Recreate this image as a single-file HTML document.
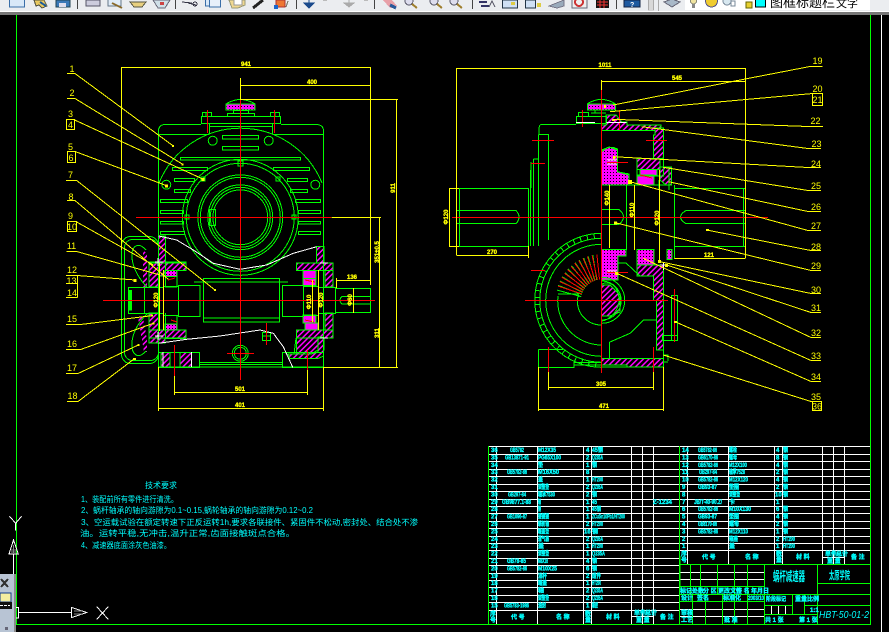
<!DOCTYPE html>
<html><head><meta charset="utf-8"><title>CAD</title>
<style>
html,body{margin:0;padding:0;background:#000;width:889px;height:632px;overflow:hidden}
svg{position:absolute;left:0;top:0;display:block}
.g{stroke:#0f0;fill:none;stroke-width:1}
.y{stroke:#ff0;fill:none;stroke-width:1}
.r{stroke:#f00;fill:none;stroke-width:1}
.w{stroke:#fff;fill:none;stroke-width:1}
text{font-family:"Liberation Sans","Noto Sans CJK SC",sans-serif}
.n text,text.n{fill:#ff0;font-size:9px;stroke:none}
.d text,text.d{fill:#ff0;font-size:6px;font-weight:bold;stroke:#ff0;stroke-width:.3}
.c text{fill:#0ff;font-size:6px;font-weight:bold;stroke:#0ff;stroke-width:.35}
.t text{fill:#0ff;font-size:8px;stroke:none}
</style></head><body>
<svg width="889" height="632" viewBox="0 0 889 632" xmlns="http://www.w3.org/2000/svg" shape-rendering="crispEdges">
<defs>
<pattern id="h" width="4" height="4" patternUnits="userSpaceOnUse" patternTransform="rotate(45)"><rect width="4" height="4" fill="#000"/><rect width="1.6" height="4" fill="#f0f"/></pattern>
<pattern id="m" width="3" height="3" patternUnits="userSpaceOnUse"><rect width="3" height="3" fill="#f0f"/><rect x="1" y="1" width="1" height="1" fill="#000"/></pattern>
</defs>

<!-- frame -->
<path class="g" d="M16.5 15V624.5H870.5V15"/>
<path class="w" d="M881.5 15V632"/>

<!-- LEFT VIEW hatch -->
<g stroke="#0f0" stroke-width="1">
<rect x="226" y="104" width="29" height="6" fill="url(#m)"/>
<path fill="url(#h)" d="M158.7 236H165.3V262H186V270.7H165V276H158.7V287H149V262H158.7Z"/>
<path fill="url(#h)" d="M149 330H186V338.7H165V343H149ZM149 313H158.7V330H149Z"/>
<rect x="165" y="270.7" width="12" height="6" fill="url(#m)"/>
<rect x="165" y="324" width="12" height="6" fill="url(#m)"/>
<path fill="url(#h)" d="M316.7 246.7H324V263H333V270.7H296.7V263H316.7Z"/>
<path fill="url(#h)" d="M296.7 330H333V338H324V350H318L311 354H296.7V338Z"/>
<path fill="url(#h)" d="M325 270.7H333V287H325ZM325 313H333V330H325Z"/>
<rect x="303" y="270.7" width="13" height="8" fill="#f0f"/>
<rect x="303" y="278.7" width="13" height="7" fill="#f0f"/>
<rect x="303" y="315" width="13" height="8" fill="#f0f"/>
<rect x="305" y="323" width="13" height="7" fill="#f0f"/>
<rect x="161" y="352.3" width="9" height="15" fill="url(#h)"/>
<rect x="180" y="352.3" width="11.7" height="15" fill="url(#h)"/>
<path fill="url(#h)" d="M288 354H311L318 352V337H323.7V356L318 358.5H290Z"/>
<path fill="url(#h)" d="M143 250L147 254V287H143ZM138 317H143L147 340V352H144Z" stroke="none"/>
</g>

<!-- LEFT VIEW green -->
<g class="g">
<path d="M158.5 367V131Q158.5 124.5 165.5 124.5H201M281 124.5H316Q323.5 124.5 323.5 131V367H158.5"/>
<path d="M158.5 134.5H209M273 134.5H323.5"/>
<rect x="201.5" y="116.5" width="79" height="7"/>
<path d="M209.5 123.5V134.5M272.5 123.5V134.5M209.5 126.5H272.5"/>
<rect x="202.5" y="112.5" width="9" height="4"/><rect x="270.5" y="112.5" width="9" height="4"/>
<path d="M206 112.5V116.5M275 112.5V116.5"/>
<rect x="227.5" y="113.5" width="27" height="3"/><rect x="233.5" y="110.5" width="15" height="3"/>
<path d="M226 104Q232 100 240.3 99.3Q249 100 255 104"/>
<path d="M159 183A88 88 0 0 1 322 183"/>
<circle cx="212.7" cy="140.7" r="4.5"/><circle cx="268.7" cy="140.7" r="4.5"/><circle cx="166.3" cy="184.7" r="4.5"/><circle cx="315.3" cy="184.7" r="4.5"/>
<rect x="222.5" y="135.5" width="36" height="3.5"/><rect x="222.5" y="146.5" width="36" height="3.5"/>
<rect x="180.5" y="157.5" width="120" height="2.5"/>
<rect x="172.5" y="167.5" width="35" height="3"/><rect x="273.5" y="167.5" width="36" height="3"/>
<rect x="174.5" y="178.5" width="20" height="3"/><rect x="287.5" y="178.5" width="20" height="3"/>
<rect x="174.5" y="189.5" width="16" height="3"/><rect x="290.5" y="189.5" width="17" height="3"/>
<rect x="160.5" y="199.5" width="27" height="3"/><rect x="295.5" y="199.5" width="25" height="3"/>
<rect x="160.5" y="210.5" width="23" height="3"/><rect x="298.5" y="210.5" width="22" height="3"/>
<rect x="160.5" y="221.5" width="23" height="2.5"/><rect x="298.5" y="221.5" width="22" height="2.5"/>
<rect x="160.5" y="231.5" width="24" height="3"/><rect x="298.5" y="231.5" width="22" height="3"/>
<circle cx="240.3" cy="217.3" r="58"/><circle cx="240.3" cy="217.3" r="54"/>
<circle cx="240.3" cy="217.3" r="42.4"/><circle cx="240.3" cy="217.3" r="40"/>
<circle cx="240.3" cy="217.3" r="32.4"/><circle cx="240.3" cy="217.3" r="30"/><circle cx="240.3" cy="217.3" r="27.4"/>
<rect x="238" y="161" width="5" height="5"/><rect x="185" y="215" width="4" height="4"/><rect x="292" y="215" width="4" height="4"/><rect x="201" y="177" width="4" height="4"/><rect x="276" y="177" width="4" height="4"/>
<rect x="209.5" y="209.5" width="6" height="16"/>
<!-- shafts -->
<rect x="203.5" y="278.5" width="76" height="43.5"/><path d="M203.5 282H279M203.5 318H279"/>
<path d="M194 282H216M262 282H288"/>
<rect x="178.5" y="285.5" width="21.5" height="31"/><rect x="163.5" y="286.5" width="15" height="29"/>
<rect x="144.5" y="287.5" width="19" height="26"/><rect x="128.5" y="287.5" width="16" height="26"/>
<rect x="282.5" y="285.5" width="21" height="31"/><rect x="303.5" y="286.5" width="15" height="29"/>
<rect x="318.5" y="287.5" width="17" height="26"/><rect x="335.5" y="288.5" width="35" height="24"/>
<path d="M370 296.5H342Q338 300 342 304H370"/>
<rect x="129" y="290.7" width="2.4" height="19.3" fill="#0f0"/>
<!-- fan cover -->
<rect x="121.5" y="236.5" width="37" height="127" rx="9"/>
<rect x="124.5" y="239.5" width="34" height="121" rx="8"/>
<path d="M146 250C138 241 131 246 132 258C133 270 141 281 147 287M146 351C138 360 131 355 132 342C133 330 141 320 147 314"/>
<!-- feet -->
<rect x="158.5" y="352.5" width="41" height="15"/><rect x="282.5" y="352.5" width="41" height="15"/>
<path d="M199.5 362.5H282.5M199.5 364.5H282.5"/>
<circle cx="240.3" cy="353.3" r="8"/><circle cx="240.3" cy="353.3" r="6"/>
<rect x="262.5" y="332.5" width="8" height="8"/><path d="M262.5 336H270.5"/>
<path d="M296 338L294 354"/>
<path d="M296.5 263H333V287H325V270.7M296.5 338H333V313H325V330"/>
<path d="M149 263V287M149 313V338H186M149 263H186"/>
<path d="M165.3 263V287H177M165.3 313V338M177 270V286M177 316V330"/>
</g>
<path class="w" d="M158.7 236L176.7 240L193.3 250L213.3 263.3L240 269.3L266.7 265L293.3 253.3L316.7 246.7"/>
<path class="w" d="M158.7 343.3L186.7 339.3L220 336L260 330L273.3 333.3L283.3 346.7L292.7 367.3"/>
<path class="w" d="M163 352V367M191.5 352V367M155 262H163M158 258V266M155 336H163M158 332V340M320 263H328M320 338H328"/>
<!-- LEFT red -->
<g class="r">
<path d="M240.3 85V380M136 217.3H331M103 300.3H375M207.3 110V133M274.3 110V133"/>
<path d="M227 353.3H254M266.3 323V345M174.3 345V376M307.3 350V370"/>
<path d="M168 280L175 278M171 320L177 322M305 280L315 282M305 320L314 322" stroke-width="1"/>
</g>
<!-- LEFT yellow -->
<g class="y">
<path d="M121.5 67V250M370.5 67V285M121.5 67.5H370.5"/>
<path d="M240.5 78V99M240.5 85.5H370.5"/>
<path d="M240 99.5H398M396.5 99.5V367.5M323 367.5H398"/>
<path d="M331.7 217.5H381M379.5 217.5V367"/>
<path d="M158.5 367V411M323.5 367V411M158.5 408.5H323.5M174.5 376V395M307.5 370V395M174.5 392.5H307.5"/>
<path d="M336.5 280.5H370.5M336.5 278V288"/>
<path d="M159.5 263V331M163.5 270V330M312.5 280V322M318.5 270V330M353.5 288V313"/>
<!-- leaders -->
<path d="M67 73.5H75L173.3 146"/>
<path d="M67 98.5H75L182.7 164.3"/>
<path d="M74.7 120L202.7 179"/><rect x="66.5" y="119.5" width="8" height="10"/>
<path d="M67 151.5H75L166.7 185.7"/><rect x="67.5" y="151.5" width="8" height="11"/>
<path d="M66 180.5H76.7L215 290"/>
<path d="M67 200.5H75L168.3 279.3"/>
<path d="M76.7 222L153.3 265"/><rect x="67.5" y="221.5" width="9" height="10"/>
<path d="M66.7 251.5H76.7L160 275"/>
<path d="M66 275.5H77.3L135 280M66 283.5H77M66 297.5H77.3M77.5 275.5V297.5"/>
<path d="M66 324.5H80.7L151.7 315.7"/>
<path d="M66 349.5H80.7L153.3 323.3"/>
<path d="M66 373.5H78L138.3 345"/>
<path d="M67 401.5H78L134 359"/>
</g>
<g fill="#ff0" shape-rendering="crispEdges"><rect x="172" y="145" width="2" height="2"/><rect x="181.5" y="163.5" width="2" height="2"/><rect x="201.5" y="178" width="3" height="3"/><rect x="165" y="184.5" width="3" height="3"/><rect x="214" y="289" width="2" height="2"/><rect x="133.5" y="279" width="3" height="3"/><rect x="151" y="314.5" width="2" height="2"/><rect x="152.5" y="322.5" width="2" height="2"/><rect x="137.5" y="344" width="2" height="2"/><rect x="133" y="358" width="3" height="2"/></g>
<g class="n" text-anchor="middle">
<text x="72" y="72">1</text><text x="72" y="96">2</text><text x="70.5" y="117">3</text><text x="70.5" y="128">4</text><text x="70.5" y="150">5</text><text x="71" y="161">6</text><text x="70.5" y="178">7</text><text x="71" y="200">8</text><text x="70.5" y="219">9</text><text x="72" y="230">10</text>
<text x="71.5" y="249">11</text><text x="72" y="273">12</text><text x="71.5" y="284">13</text><text x="72" y="296">14</text><text x="72" y="322">15</text><text x="72" y="347">16</text><text x="72" y="371">17</text><text x="72.5" y="399">18</text>
</g>
<g class="d" text-anchor="middle">
<text x="246" y="66">941</text><text x="312" y="84">400</text><text x="240" y="391">501</text><text x="240" y="407">401</text><text x="352" y="279">136</text>
<text transform="translate(395,188) rotate(-90)">911</text>
<text transform="translate(379,252) rotate(-90)">351±0.5</text>
<text transform="translate(379,333) rotate(-90)">311</text>
<text transform="translate(158,300) rotate(-90)">Φ120</text>
<text transform="translate(311,302) rotate(-90)">Φ110</text>
<text transform="translate(323,300) rotate(-90)">Φ120</text>
<text transform="translate(352,300) rotate(-90)">Φ60</text>
</g>

<!-- RIGHT VIEW hatch -->
<g stroke="#0f0">
<rect x="587.3" y="104" width="28" height="6" fill="url(#m)"/>
<path fill="url(#h)" d="M601.7 125H606V115H616L622 122H627V125H661V130.7H601.7Z"/>
<path fill="url(#h)" d="M655 128H663.3V158.3H653.3V135H655Z"/>
<path fill="url(#h)" d="M637 158.3H660V169.3H637Z"/>
<rect x="640" y="169.3" width="17" height="6" fill="#f0f"/>
<rect x="637" y="175" width="17" height="10" fill="#f0f"/>
<path fill="url(#h)" d="M660 167H671.7V185H666L660 180Z"/>
<path fill="url(#m)" d="M601.7 150L609 147L617.3 150V171.7L629 174V185H601.7Z"/>
<path fill="url(#m)" d="M601.7 249.3H626V256H618V280H601.7Z"/>
<path fill="url(#m)" d="M637 249.3H654V265H637Z"/>
<rect x="667" y="249.3" width="5" height="10" fill="url(#m)"/>
<path fill="url(#h)" d="M637 265H663.3V300.7H653.3V276H637Z"/>
<path fill="url(#h)" d="M656.7 300.7H663.3V350H656.7Z"/>
<path fill="url(#h)" d="M601.7 358.3H663.3V367H627V365H601.7Z"/>
<path fill="url(#h)" d="M601.7 285H610L620 295V312L610 316H601.7Z"/>
</g>
<!-- RIGHT green -->
<g class="g">
<path d="M587 104Q594 99.5 601.7 99.3Q610 100 615.3 104"/>
<rect x="576.5" y="116.5" width="30" height="7"/><rect x="578.5" y="112.5" width="10" height="4"/>
<path d="M591 113H606M595 110V113"/>
<path d="M576 124.5H541Q539 125 539 130V134.5M538.5 134.5H548.5V188M538.5 134.5V188M533.5 159H538.5M533.5 159V188M531 162V188M528.5 188V246M530.5 170V246"/>
<path d="M533.5 188V246M538.5 188V246M548.5 188V240"/>
<path d="M449 188.5H528.5M456.5 188.5V246M459.5 188.5V246M449 246.5H528.5"/>
<path d="M456.7 210.5H516Q522 217 516 223.7H456.7"/>
<path d="M601.7 209.5H619Q628 217 619 224.3H601.7"/>
<path d="M674.5 188.5H745.3M743.5 188.5V246M745.3 188.5V246M674.5 246.5H745.3M674.5 185V259"/>
<path d="M745.3 210.5H686Q675 217 686 223.7H745.3"/>
<path d="M626.5 185V250M634.5 185V250"/>
<path d="M601.7 185H672M659 180V189M669 190V167"/>
<path d="M601.7 152C606 147 612 146 617.3 149V171.7L629 175V185"/>
<!-- gear -->
<path d="M601.7 233.3A67 67 0 0 0 601.7 367.3"/>
<path d="M601.7 238.3A62 62 0 0 0 601.7 362.3"/>
<path d="M601.7 244.3A56 56 0 0 0 601.7 356.3"/>
<path d="M601.7 235.8A64.5 64.5 0 0 0 601.7 364.8" stroke-width="5" stroke-dasharray="1 6"/>
<path d="M558 296A44 44 0 0 0 601.7 345"/>
<path d="M578 296A23.7 23.7 0 0 0 601.7 325"/>
<path d="M558 294H578L579 297"/>
<path d="M601.7 277.3A23 23 0 0 1 601.7 323.3"/>
<path d="M601.7 281A19.5 19.5 0 0 1 601.7 320"/>
<path d="M601.7 284C612 280 618 288 619 298C620 310 610 320 601.7 321"/>
<path d="M609.3 358.3V342.3L630 333.3L643.3 320H656.7"/>
<path d="M618 263H626L640 276H653"/>
<rect x="671.5" y="295.5" width="6" height="45"/><rect x="662.5" y="335.5" width="15" height="5"/>
<path d="M663 355H668V361M663.5 362H668"/>
<path d="M538.5 349.5V367.5H574V362.5H601.7M538.5 349.5H563M574 365H601.7"/>
<path d="M663.5 158V176H637V158M636.7 265H663.5"/>
<path d="M663.5 300V367H601.7"/>
</g>
<g stroke-linecap="butt">
<g class="g" stroke-width="1">
<line x1="555.7" y1="302" x2="581" y2="302" transform="rotate(15 601.7 300.3)"/>
<line x1="555.7" y1="302" x2="581" y2="302" transform="rotate(21 601.7 300.3)"/>
<line x1="555.7" y1="302" x2="581" y2="302" transform="rotate(27 601.7 300.3)"/>
<line x1="555.7" y1="302" x2="581" y2="302" transform="rotate(33 601.7 300.3)"/>
<line x1="555.7" y1="302" x2="581" y2="302" transform="rotate(39 601.7 300.3)"/>
<line x1="555.7" y1="302" x2="581" y2="302" transform="rotate(45 601.7 300.3)"/>
<line x1="555.7" y1="302" x2="581" y2="302" transform="rotate(51 601.7 300.3)"/>
<line x1="555.7" y1="302" x2="581" y2="302" transform="rotate(57 601.7 300.3)"/>
<line x1="555.7" y1="302" x2="581" y2="302" transform="rotate(63 601.7 300.3)"/>
<line x1="555.7" y1="302" x2="581" y2="302" transform="rotate(69 601.7 300.3)"/>
<line x1="555.7" y1="302" x2="581" y2="302" transform="rotate(75 601.7 300.3)"/>
<line x1="555.7" y1="302" x2="581" y2="302" transform="rotate(81 601.7 300.3)"/>
</g>
<g class="r">
<line x1="555.7" y1="300.3" x2="581" y2="300.3" transform="rotate(18 601.7 300.3)"/>
<line x1="555.7" y1="300.3" x2="581" y2="300.3" transform="rotate(24 601.7 300.3)"/>
<line x1="555.7" y1="300.3" x2="581" y2="300.3" transform="rotate(30 601.7 300.3)"/>
<line x1="555.7" y1="300.3" x2="581" y2="300.3" transform="rotate(36 601.7 300.3)"/>
<line x1="555.7" y1="300.3" x2="581" y2="300.3" transform="rotate(42 601.7 300.3)"/>
<line x1="555.7" y1="300.3" x2="581" y2="300.3" transform="rotate(48 601.7 300.3)"/>
<line x1="555.7" y1="300.3" x2="581" y2="300.3" transform="rotate(54 601.7 300.3)"/>
<line x1="555.7" y1="300.3" x2="581" y2="300.3" transform="rotate(60 601.7 300.3)"/>
<line x1="555.7" y1="300.3" x2="581" y2="300.3" transform="rotate(66 601.7 300.3)"/>
<line x1="555.7" y1="300.3" x2="581" y2="300.3" transform="rotate(72 601.7 300.3)"/>
<line x1="555.7" y1="300.3" x2="581" y2="300.3" transform="rotate(78 601.7 300.3)"/>
<line x1="555.7" y1="300.3" x2="581" y2="300.3" transform="rotate(84 601.7 300.3)"/>
</g>
</g>
<!-- RIGHT red -->
<g class="r">
<path d="M601.7 90V373M452 217.5H768M525 300.5H668"/>
<path d="M532 140.5H554M646 140.5H667M531 163.5H545M582.7 110V127M619.5 110V130M607 162.5H628"/>
<path d="M531 270.5H545M607 272.5H628M674.5 289V342M548.5 347V372M653.5 347V372"/>
<path d="M607 162.5H622M640 175L652 178"/>
</g>
<path class="w" d="M576 122.7H595M606.7 122.7H626.7M607 160H617M607 164H617M607 271H617M660 265H668M663.5 263V270"/>
<!-- RIGHT yellow -->
<g class="y">
<path d="M456.5 68V255M745.5 68V258M456.5 68.5H745.5"/>
<path d="M601.7 80V90M601.7 81.5H745.5"/>
<path d="M449 188.5H459M449.5 188V246M449 246.5H459"/>
<path d="M456.5 255.5H528.7M528.5 246V258"/>
<path d="M674.5 258.5H745.5"/>
<path d="M548.5 372V390M653.5 372V390M548.5 387.5H653.5"/>
<path d="M538.5 367V411M663.5 367V411M538.5 409.5H663.5"/>
<path d="M609.5 185V248M634.5 185V250M659.5 170V260"/>
<!-- leaders -->
<path d="M613.3 105L746.7 78.7L810 66.5H822.7"/>
<path d="M610 111.7L812.7 93.5H822.7"/><rect x="812.5" y="93.5" width="10" height="12"/>
<path d="M613.3 119.3L808 126.5H823"/>
<path d="M641.7 126.7L808 148.5H821"/>
<path d="M613.3 156.7L808 167.5H821"/>
<path d="M663.3 167.3L808 190.5H821"/>
<path d="M668.3 181.7L808 211.5H821"/>
<path d="M630 181.7L808 230.5H821"/>
<path d="M706.7 230L811 250.5H821"/>
<path d="M615 222.7L811 270.5H821"/>
<path d="M660 261.7L811 293.5H821"/>
<path d="M666.7 265L811 312.5H821"/>
<path d="M643.3 258.3L811 337.5H821"/>
<path d="M616.7 273.3L811 360.5H821"/>
<path d="M675 321.7L811 381.5H821"/>
<path d="M663.3 355L811 401.5H821"/><rect x="812.5" y="401.5" width="9" height="9"/>
</g>
<g fill="#ff0"><rect x="604" y="105" width="2" height="3"/><rect x="612" y="119" width="3" height="2"/><rect x="613" y="156" width="2" height="3"/><rect x="628" y="180" width="4" height="4"/><rect x="614" y="221.5" width="3" height="3"/><rect x="706" y="229" width="3" height="2"/><rect x="615" y="272" width="3" height="3"/><rect x="674" y="321" width="3" height="2"/><rect x="658" y="260" width="3" height="3"/><rect x="665" y="264" width="3" height="3"/></g>
<g class="n" text-anchor="middle">
<text x="817.5" y="64">19</text><text x="817.5" y="92">20</text><text x="817.5" y="103">21</text><text x="815.5" y="124">22</text><text x="816.5" y="147">23</text><text x="816" y="167">24</text><text x="816" y="189">25</text><text x="816" y="210">26</text><text x="816" y="229">27</text><text x="816" y="250">28</text><text x="816" y="269">29</text><text x="816" y="293">30</text><text x="816" y="311">31</text><text x="816" y="336">32</text><text x="816" y="359">33</text><text x="816" y="380">34</text><text x="816" y="400">35</text><text x="817" y="409.5">36</text>
</g>
<g class="d" text-anchor="middle">
<text x="605" y="67">1011</text><text x="677" y="80">545</text><text x="492" y="254">270</text><text x="709" y="257">121</text><text x="601" y="386">305</text><text x="604" y="408">471</text>
<text transform="translate(448,217) rotate(-90)">Φ120</text>
<text transform="translate(609,198) rotate(-90)">Φ140</text>
<text transform="translate(634,210) rotate(-90)">Φ110</text>
<text transform="translate(659,218) rotate(-90)">Φ120</text>
</g>

<!-- TECH NOTES -->
<g class="t">
<text x="145" y="488" textLength="32" lengthAdjust="spacingAndGlyphs">技术要求</text>
<text x="81" y="502" textLength="97" lengthAdjust="spacingAndGlyphs">1、装配前所有零件进行清洗。</text>
<text x="81" y="513" textLength="232" lengthAdjust="spacingAndGlyphs">2、蜗杆轴承的轴向游隙为0.1~0.15,蜗轮轴承的轴向游隙为0.12~0.2</text>
<text x="81" y="525" textLength="337" lengthAdjust="spacingAndGlyphs">3、空运载试验在额定转速下正反运转1h,要求各联接件、紧固件不松动,密封处、结合处不渗</text>
<text x="80" y="536" textLength="215" lengthAdjust="spacingAndGlyphs">油。运转平稳,无冲击,温升正常,齿面接触斑点合格。</text>
<text x="81" y="548" textLength="90" lengthAdjust="spacingAndGlyphs">4、减速器底面涂灰色油漆。</text>
</g>

<!-- TABLE -->
<g class="w" stroke-width="1">
<path d="M488 446.5H871M488 454.5H871M488 461.5H871M488 469.5H871M488 476.5H871M488 484.5H871M488 491.5H871M488 499.5H871M488 506.5H871M488 513.5H871M488 521.5H871M488 528.5H871M488 536.5H871M488 543.5H871M488 550.5H871"/>
<path d="M488 558.5H679M488 565.5H679M488 573.5H679M488 580.5H679M488 587.5H679M488 595.5H679M488 602.5H679M488 610.5H679"/>
<path d="M496.5 446V624M537.5 446V624M583.5 446V624M591.5 446V624M631.5 446V624M642.5 446V624M653.5 446V624"/>
<path d="M687.5 446V564M728.5 446V564M774.5 446V564M782.5 446V564M822.5 446V564M833.5 446V564M844.5 446V564"/>
<path d="M631.5 616.5H653.5M822.5 557.5H844.5"/>
<path d="M680 572.5H764M680 579.5H764M680 609.5H764M680 616.5H764M771.5 605V614M778.5 605V614M785.5 605V614"/>
</g>
<g class="g">
<path d="M488.5 446V624.5M679.5 446V624.5M870.5 446V624.5"/>
<path d="M679.5 564.5H870.5M680 586.5H764M680 594.5H870M680 601.5H764"/>
<path d="M690.5 564.5V594M700.5 564.5V594M717.5 564.5V594M734.5 564.5V624M747.5 564.5V624M764.5 564.5V624M817.5 564.5V624"/>
<path d="M692.5 594V624M705.5 594V624M722.5 594V624"/>
<path d="M764 614.5H817.5M792.5 594V614M804.5 594V614M764 605.5H792.5M804.5 605.5H870M817.5 583.5H870"/>
<path d="M680 589V556M679.5 565V624"/>
</g>
<g class="c">
<text x="491" y="452">36</text><text x="510" y="452" textLength="14" lengthAdjust="spacingAndGlyphs">GB5782</text><text x="538" y="452" textLength="18" lengthAdjust="spacingAndGlyphs">M12X35</text><text x="586" y="452">4</text><text x="592" y="452" textLength="11" lengthAdjust="spacingAndGlyphs">45钢</text>
<text x="491" y="459.5">35</text><text x="505" y="459.5" textLength="24" lengthAdjust="spacingAndGlyphs">GB13871-91</text><text x="538" y="459.5" textLength="23" lengthAdjust="spacingAndGlyphs">PG65X100</text><text x="586" y="459.5">2</text><text x="592" y="459.5" textLength="11" lengthAdjust="spacingAndGlyphs">Q235A</text>
<text x="491" y="467">34</text><text x="538" y="467" textLength="5" lengthAdjust="spacingAndGlyphs">垫</text><text x="586" y="467">1</text><text x="592" y="467" textLength="5" lengthAdjust="spacingAndGlyphs">钢</text>
<text x="491" y="474">33</text><text x="507" y="474" textLength="20" lengthAdjust="spacingAndGlyphs">GB5782-86</text><text x="538" y="474" textLength="21" lengthAdjust="spacingAndGlyphs">M16X50</text><text x="586" y="474">8</text>
<text x="491" y="481.5">32</text><text x="538" y="481.5" textLength="5" lengthAdjust="spacingAndGlyphs">盖</text><text x="586" y="481.5">1</text><text x="592" y="481.5" textLength="11" lengthAdjust="spacingAndGlyphs">HT200</text>
<text x="491" y="489">31</text><text x="538" y="489" textLength="11" lengthAdjust="spacingAndGlyphs">调整垫</text><text x="586" y="489">2</text><text x="592" y="489" textLength="11" lengthAdjust="spacingAndGlyphs">Q235A</text>
<text x="491" y="496.5">30</text><text x="508" y="496.5" textLength="18" lengthAdjust="spacingAndGlyphs">GB297-84</text><text x="538" y="496.5" textLength="17" lengthAdjust="spacingAndGlyphs">轴承7530</text><text x="586" y="496.5">2</text><text x="592" y="496.5" textLength="5" lengthAdjust="spacingAndGlyphs">钢</text>
<text x="491" y="504">29</text><text x="502" y="504" textLength="29" lengthAdjust="spacingAndGlyphs">GB9877.1-88</text><text x="538" y="504" textLength="3" lengthAdjust="spacingAndGlyphs">轴</text><text x="586" y="504">1</text><text x="592" y="504" textLength="5" lengthAdjust="spacingAndGlyphs">45</text><text x="653" y="504" textLength="19" lengthAdjust="spacingAndGlyphs">Z-1234</text>
<text x="491" y="511">28</text><text x="538" y="511" textLength="3" lengthAdjust="spacingAndGlyphs">键</text><text x="586" y="511">1</text><text x="592" y="511" textLength="9" lengthAdjust="spacingAndGlyphs">45钢</text>
<text x="491" y="518.5">27</text><text x="507" y="518.5" textLength="20" lengthAdjust="spacingAndGlyphs">GB1096-87</text><text x="538" y="518.5" textLength="11" lengthAdjust="spacingAndGlyphs">键键键</text><text x="586" y="518.5">1</text><text x="592" y="518.5" textLength="33" lengthAdjust="spacingAndGlyphs">ZCuSn10Pb1/HT200</text>
<text x="491" y="526">26</text><text x="538" y="526" textLength="11" lengthAdjust="spacingAndGlyphs">蜗轮轴</text><text x="586" y="526">2</text><text x="592" y="526" textLength="11" lengthAdjust="spacingAndGlyphs">HT200</text>
<text x="491" y="533.5">25</text><text x="538" y="533.5" textLength="11" lengthAdjust="spacingAndGlyphs">端盖垫</text><text x="584" y="533.5">16</text><text x="592" y="533.5" textLength="6" lengthAdjust="spacingAndGlyphs">钢</text>
<text x="491" y="541">24</text><text x="538" y="541" textLength="11" lengthAdjust="spacingAndGlyphs">通气器</text><text x="586" y="541">2</text><text x="592" y="541" textLength="11" lengthAdjust="spacingAndGlyphs">Q235A</text>
<text x="491" y="548">23</text><text x="538" y="548" textLength="6" lengthAdjust="spacingAndGlyphs">盖</text><text x="586" y="548">1</text><text x="592" y="548" textLength="11" lengthAdjust="spacingAndGlyphs">HT200</text>
<text x="491" y="555.5">22</text><text x="538" y="555.5" textLength="11" lengthAdjust="spacingAndGlyphs">调整垫</text><text x="586" y="555.5">1</text><text x="592" y="555.5" textLength="13" lengthAdjust="spacingAndGlyphs">Q235A</text>
<text x="491" y="563">21</text><text x="507" y="563" textLength="19" lengthAdjust="spacingAndGlyphs">GB78-85</text><text x="538" y="563" textLength="10" lengthAdjust="spacingAndGlyphs">M8X16</text><text x="586" y="563">4</text><text x="592" y="563" textLength="5" lengthAdjust="spacingAndGlyphs">钢</text>
<text x="491" y="570.5">20</text><text x="507" y="570.5" textLength="20" lengthAdjust="spacingAndGlyphs">GB5782-86</text><text x="538" y="570.5" textLength="19" lengthAdjust="spacingAndGlyphs">M10X25</text><text x="586" y="570.5">6</text><text x="592" y="570.5" textLength="5" lengthAdjust="spacingAndGlyphs">钢</text>
<text x="491" y="578">19</text><text x="538" y="578" textLength="9" lengthAdjust="spacingAndGlyphs">油杯</text><text x="586" y="578">2</text><text x="592" y="578" textLength="9" lengthAdjust="spacingAndGlyphs">组件</text>
<text x="491" y="585">18</text><text x="538" y="585" textLength="9" lengthAdjust="spacingAndGlyphs">端盖</text><text x="586" y="585">1</text><text x="592" y="585" textLength="9" lengthAdjust="spacingAndGlyphs">HT200</text>
<text x="491" y="592.5">17</text><text x="538" y="592.5" textLength="6" lengthAdjust="spacingAndGlyphs">轴</text><text x="586" y="592.5">2</text><text x="592" y="592.5" textLength="11" lengthAdjust="spacingAndGlyphs">Q235A</text>
<text x="491" y="600">16</text><text x="538" y="600" textLength="11" lengthAdjust="spacingAndGlyphs">调整垫</text><text x="586" y="600">2</text><text x="592" y="600" textLength="11" lengthAdjust="spacingAndGlyphs">Q235A</text>
<text x="491" y="607.5">15</text><text x="504" y="607.5" textLength="25" lengthAdjust="spacingAndGlyphs">GB5783-1986</text><text x="538" y="607.5" textLength="8" lengthAdjust="spacingAndGlyphs">油封</text><text x="586" y="607.5">1</text><text x="592" y="607.5" textLength="6" lengthAdjust="spacingAndGlyphs">橡胶</text>
<text x="490" y="616">序</text><text x="490" y="622">号</text><text x="511" y="619">代 号</text><text x="556" y="619">名 称</text><text x="585" y="616">数</text><text x="585" y="622">量</text><text x="606" y="619">材 料</text><text x="634" y="615">单件</text><text x="645" y="615">总计</text><text x="636" y="622">重 量</text><text x="660" y="619">备 注</text>
<!-- right table -->
<text x="682" y="452">14</text><text x="698" y="452" textLength="19" lengthAdjust="spacingAndGlyphs">GB5782-86</text><text x="729" y="452" textLength="8" lengthAdjust="spacingAndGlyphs">螺栓</text><text x="776" y="452">4</text><text x="783" y="452" textLength="5" lengthAdjust="spacingAndGlyphs">钢</text>
<text x="682" y="459.5">13</text><text x="698" y="459.5" textLength="20" lengthAdjust="spacingAndGlyphs">GB6170-86</text><text x="729" y="459.5" textLength="8" lengthAdjust="spacingAndGlyphs">螺母</text><text x="776" y="459.5">8</text><text x="783" y="459.5" textLength="5" lengthAdjust="spacingAndGlyphs">钢</text>
<text x="682" y="467">12</text><text x="698" y="467" textLength="20" lengthAdjust="spacingAndGlyphs">GB5782-86</text><text x="729" y="467" textLength="18" lengthAdjust="spacingAndGlyphs">M12X100</text><text x="776" y="467">4</text><text x="783" y="467" textLength="5" lengthAdjust="spacingAndGlyphs">钢</text>
<text x="682" y="474">11</text><text x="699" y="474" textLength="18" lengthAdjust="spacingAndGlyphs">GB297-84</text><text x="729" y="474" textLength="16" lengthAdjust="spacingAndGlyphs">轴承7528</text><text x="776" y="474">2</text><text x="783" y="474" textLength="5" lengthAdjust="spacingAndGlyphs">钢</text>
<text x="682" y="481.5">10</text><text x="698" y="481.5" textLength="20" lengthAdjust="spacingAndGlyphs">GB5782-86</text><text x="729" y="481.5" textLength="19" lengthAdjust="spacingAndGlyphs">M12X120</text><text x="776" y="481.5">4</text><text x="783" y="481.5" textLength="5" lengthAdjust="spacingAndGlyphs">钢</text>
<text x="682" y="489">9</text><text x="698" y="489" textLength="19" lengthAdjust="spacingAndGlyphs">GB93-87</text><text x="729" y="489" textLength="10" lengthAdjust="spacingAndGlyphs">垫圈</text><text x="776" y="489">2</text><text x="783" y="489" textLength="5" lengthAdjust="spacingAndGlyphs">钢</text>
<text x="682" y="496.5">8</text><text x="729" y="496.5" textLength="11" lengthAdjust="spacingAndGlyphs">调整垫</text><text x="775" y="496.5">10</text><text x="783" y="496.5" textLength="5" lengthAdjust="spacingAndGlyphs">钢</text>
<text x="682" y="504">7</text><text x="694" y="504" textLength="28" lengthAdjust="spacingAndGlyphs">JB/T-40-90.Z/</text><text x="729" y="504" textLength="6" lengthAdjust="spacingAndGlyphs">卡</text><text x="776" y="504">1</text>
<text x="682" y="511">6</text><text x="698" y="511" textLength="20" lengthAdjust="spacingAndGlyphs">GB5782-86</text><text x="729" y="511" textLength="22" lengthAdjust="spacingAndGlyphs">M10X130</text><text x="776" y="511">6</text><text x="783" y="511" textLength="5" lengthAdjust="spacingAndGlyphs">钢</text>
<text x="682" y="518.5">5</text><text x="698" y="518.5" textLength="19" lengthAdjust="spacingAndGlyphs">GB93-87</text><text x="729" y="518.5" textLength="10" lengthAdjust="spacingAndGlyphs">垫圈</text><text x="776" y="518.5">4</text><text x="783" y="518.5" textLength="5" lengthAdjust="spacingAndGlyphs">钢</text>
<text x="682" y="526">4</text><text x="698" y="526" textLength="19" lengthAdjust="spacingAndGlyphs">GB6170-86</text><text x="729" y="526" textLength="10" lengthAdjust="spacingAndGlyphs">螺母</text><text x="776" y="526">2</text><text x="783" y="526" textLength="5" lengthAdjust="spacingAndGlyphs">钢</text>
<text x="682" y="533.5">3</text><text x="698" y="533.5" textLength="20" lengthAdjust="spacingAndGlyphs">GB5782-86</text><text x="729" y="533.5" textLength="19" lengthAdjust="spacingAndGlyphs">M12X110</text><text x="776" y="533.5">1</text><text x="783" y="533.5" textLength="5" lengthAdjust="spacingAndGlyphs">钢</text>
<text x="682" y="541">2</text><text x="729" y="541" textLength="9" lengthAdjust="spacingAndGlyphs">箱座</text><text x="776" y="541">2</text><text x="783" y="541" textLength="12" lengthAdjust="spacingAndGlyphs">HT200</text>
<text x="682" y="548">1</text><text x="729" y="548" textLength="6" lengthAdjust="spacingAndGlyphs">盖</text><text x="776" y="548">1</text><text x="783" y="548" textLength="12" lengthAdjust="spacingAndGlyphs">HT200</text>
<text x="681" y="556">序</text><text x="681" y="562">号</text><text x="702" y="559">代 号</text><text x="745" y="559">名 称</text><text x="776" y="556">数</text><text x="776" y="562">量</text><text x="796" y="559">材 料</text><text x="825" y="556">单件</text><text x="836" y="556">总计</text><text x="827" y="563">重 量</text><text x="851" y="559">备 注</text>
<!-- title block -->
<text x="680" y="593">标记</text><text x="692" y="593">处数</text><text x="703" y="593">分 区</text><text x="718" y="593">更改文件</text><text x="736" y="593">签 名</text><text x="751" y="593">年月日</text>
<text x="681" y="600">设计</text><text x="697" y="600">签名</text><text x="723" y="600">标准化</text><text x="748" y="600" textLength="16" lengthAdjust="spacingAndGlyphs">2003/10</text>
<text x="681" y="615">审核</text><text x="681" y="622">工艺</text><text x="724" y="622">批 准</text>
<text x="766" y="601" textLength="20" lengthAdjust="spacingAndGlyphs">阶段标记</text><text x="795" y="601">重量</text><text x="807" y="601">比例</text><text x="810" y="612">1:1</text>
<text x="765" y="622">共 1 张</text><text x="799" y="622">第 1 张</text>
</g>
<g style="fill:#0ff;stroke:none">
<text x="773" y="581" fill="#0ff" font-size="13" font-weight="bold" textLength="32" lengthAdjust="spacingAndGlyphs">蜗杆减速器</text>
<text x="829" y="579" fill="#0ff" font-size="11" font-weight="bold" textLength="21" lengthAdjust="spacingAndGlyphs">太原学院</text>
<text x="819" y="618" fill="#0ff" font-size="10" font-style="italic" textLength="50" lengthAdjust="spacingAndGlyphs">HBT-50-01-2</text>
</g>

<!-- UCS -->
<g class="w">
<path d="M9.3 516L15.7 523.3L21.7 516M15.7 523.3V530.7"/>
<path d="M13.5 540L9 554H18.3Z"/><path d="M13.5 545V553M12 549V553M15 549V553" stroke="#888"/>
<path d="M13.5 554V574"/>
<path d="M15 607.5H18.5V618H15M18.5 612.5H71.7"/>
<path d="M71.7 607.5L86.7 612.5L71.7 617.5Z"/><path d="M74 611H82M74 614H82" stroke="#888"/>
<path d="M96.7 606.7L108.3 619.3M108.3 606.7L96.7 619.3"/>
</g>

<!-- palette -->
<rect x="0" y="574" width="15" height="58" fill="#b8c4d4"/>
<rect x="14" y="574" width="2" height="58" fill="#8a8a8a"/>
<path d="M1 579L8 587M8 579L1 587" stroke="#333" stroke-width="2"/>
<rect x="0" y="593" width="11" height="9" fill="#f4eda0" stroke="#123a8c"/>
<rect x="0" y="602" width="12" height="7" fill="#111"/><path d="M0 605.5H10" stroke="#fff" stroke-dasharray="3 1"/>
<rect x="5" y="627" width="3" height="3" fill="#667"/>

<!-- toolbar -->
<rect x="0" y="0" width="889" height="11" fill="#ebedf0"/>
<rect x="0" y="11" width="889" height="1" fill="#fff"/>
<rect x="0" y="12" width="889" height="3" fill="#777"/>
<rect x="685" y="0" width="185" height="10" fill="#fff"/>
<g>
<rect x="9.5" y="-2" width="15" height="9" fill="#d8e8f8" stroke="#3a6ea8"/>
<path d="M34 0H44L47 6L42 8L39 5L36 6Z" fill="#e8c860" stroke="#554"/><path d="M40 2L46 6" stroke="#1a5a9a" stroke-width="2"/>
<rect x="56" y="0" width="14" height="7" fill="#3a78b8" stroke="#245"/><rect x="59" y="3" width="7" height="4" fill="#dde"/>
<rect x="86" y="0" width="14" height="6" fill="#ccd" stroke="#556"/>
<rect x="108" y="-1" width="13" height="7" fill="#e0ecf8" stroke="#678"/><path d="M112 3L122 8" stroke="#8a6a2a" stroke-width="2"/>
<path d="M130 2H146L142 7H134Z" fill="#e8d080" stroke="#554"/>
<path d="M153 0H170L165 8H158Z" fill="#d0e0e8" stroke="#667"/><rect x="160" y="2" width="4" height="3" fill="#c44"/>
<path d="M182 2L192 3M188 3L196 5" stroke="#334" stroke-width="1"/><circle cx="195" cy="4" r="2" fill="none" stroke="#334"/>
<rect x="205.5" y="-2" width="12" height="8" fill="#d8e8f8" stroke="#3a6ea8"/><rect x="209.5" y="-1" width="11" height="8" fill="#e8f0fa" stroke="#3a6ea8"/>
<path d="M229 0H245V5L238 8H232Z" fill="#f0d890" stroke="#997"/><rect x="234" y="-2" width="8" height="7" fill="#fff" stroke="#999"/>
<path d="M253 8L263 0" stroke="#222" stroke-width="3"/>
<rect x="276" y="0" width="9" height="7" fill="#ee7733" stroke="#a33"/><rect x="274" y="5" width="4" height="4" fill="#1a66cc"/><path d="M286 7L288 1" stroke="#776"/>
<path d="M309 0V4M304 3H314L309 8Z" fill="#1a4a8c" stroke="#1a4a8c"/>
<rect x="323" y="0" width="4" height="1" fill="#bbb"/>
<path d="M349 0V3M344 3H354L349 7Z" fill="#aaa" stroke="#aaa"/>
<rect x="364" y="0" width="4" height="1" fill="#bbb"/>
<path d="M383 0H392L397 6L393 8H390Z" fill="#e8a0a8"/><path d="M390 5L396 8" stroke="#2a5a9a" stroke-width="3"/>
<circle cx="409" cy="1" r="4" fill="#dde" stroke="#556"/><path d="M412 4L417 8" stroke="#a08030" stroke-width="2"/>
<circle cx="434" cy="1" r="4" fill="#dde" stroke="#556"/><path d="M437 4L442 8" stroke="#a08030" stroke-width="2"/>
<circle cx="454" cy="1" r="4" fill="#dde" stroke="#556"/><path d="M457 4L462 8" stroke="#a08030" stroke-width="2"/>
<path d="M479 2H487M481 6H489" stroke="#336" stroke-width="2"/><path d="M489 7L492 1L495 7" stroke="#445" fill="none"/>
<rect x="502.5" y="0" width="15" height="8" fill="#cfe0f4" stroke="#234"/><rect x="511" y="2" width="4" height="3" fill="#dc4"/>
<rect x="525.5" y="0" width="10" height="8" fill="#cfe0f4" stroke="#234"/><rect x="537" y="3" width="4" height="4" fill="#dc4"/>
<path d="M549 6L564 0V6L557 8Z" fill="#9ab" stroke="#778"/>
<rect x="572" y="-1" width="15" height="9" fill="#eee" stroke="#667"/><circle cx="579" cy="2" r="4" fill="none" stroke="#c33" stroke-width="2"/>
<rect x="596" y="0" width="13" height="8" fill="#111"/><path d="M597 2H608M597 5H608M600 0V8M604 0V8" stroke="#e33"/>
<rect x="624" y="0" width="16" height="7" fill="#1e5aa0" stroke="#124"/><text x="630" y="7" font-size="7" fill="#fff" font-weight="bold">?</text>
<path d="M77.5 0V9M175.5 0V9M296.5 0V9M374.5 0V9M472.5 0V9M616.5 0V9" stroke="#444"/>
<rect x="648" y="0" width="6" height="11" fill="#d8d8d8"/><path d="M648.5 0V10M653.5 0V10M658.5 0V11" stroke="#aaa"/>
<path d="M664 2L672 -1L680 2L672 7Z" fill="#a8b8c8" stroke="#667"/>
<circle cx="693.5" cy="1" r="3" fill="#f0e4a0" stroke="#887"/><rect x="692" y="4" width="3" height="4" fill="#888"/>
<circle cx="711.5" cy="1" r="6" fill="#f0cc30" stroke="#558"/>
<circle cx="727" cy="1" r="4" fill="#d8e8f0" stroke="#789"/><rect x="731" y="1" width="4" height="5" fill="#fff" stroke="#789"/>
<rect x="746" y="2" width="6" height="6" fill="#e8d030" stroke="#660"/>
<rect x="755.5" y="-1" width="10" height="8" fill="#0ff" stroke="#000"/>
<text x="770" y="7" font-size="13" fill="#000">图框标题栏</text><text x="836" y="7" font-size="11" fill="#000">文字</text>
</g>
</svg>
</body></html>
